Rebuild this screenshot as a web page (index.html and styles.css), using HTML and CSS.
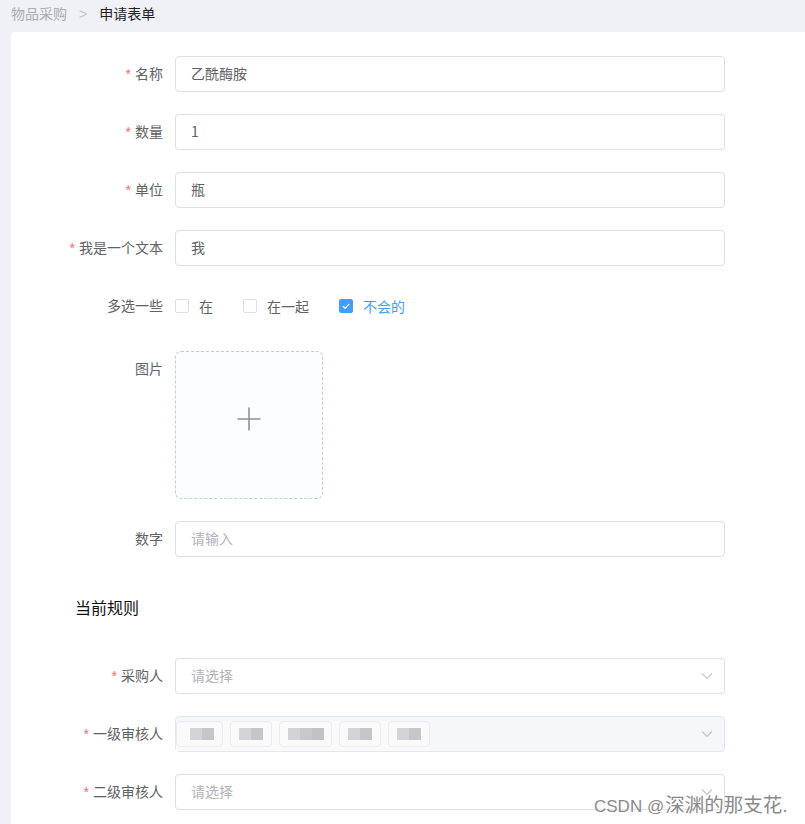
FILE: index.html
```html
<!DOCTYPE html>
<html lang="zh-CN">
<head>
<meta charset="utf-8">
<title>申请表单</title>
<link rel="stylesheet" href="styles.css">
</head>
<body>
<div class="breadcrumb">
  <span class="crumb">物品采购</span><span class="sep">&gt;</span><span class="crumb current">申请表单</span>
</div>
<div class="card">
  <div class="form-item">
    <label class="label"><span class="req">*</span>名称</label>
    <div class="input">乙酰酶胺</div>
  </div>
  <div class="form-item">
    <label class="label"><span class="req">*</span>数量</label>
    <div class="input">1</div>
  </div>
  <div class="form-item">
    <label class="label"><span class="req">*</span>单位</label>
    <div class="input">瓶</div>
  </div>
  <div class="form-item">
    <label class="label"><span class="req">*</span>我是一个文本</label>
    <div class="input">我</div>
  </div>
  <div class="form-item form-item--check">
    <label class="label">多选一些</label>
    <div class="checks">
      <span class="check"><span class="box"></span><span class="check-label">在</span></span>
      <span class="check"><span class="box"></span><span class="check-label">在一起</span></span>
      <span class="check is-checked"><span class="box"><svg viewBox="0 0 14 14" width="14" height="14"><path d="M4 7.2 L6.2 9.3 L10.2 4.8" fill="none" stroke="#fff" stroke-width="1.2"/></svg></span><span class="check-label">不会的</span></span>
    </div>
  </div>
  <div class="form-item form-item--upload">
    <label class="label">图片</label>
    <div class="upload">
      <svg viewBox="0 0 24 24" width="24" height="24"><path d="M12 0.5 V23.5 M0.5 12 H23.5" stroke="#8c939d" stroke-width="1.6" fill="none"/></svg>
    </div>
  </div>
  <div class="form-item">
    <label class="label">数字</label>
    <div class="input placeholder">请输入</div>
  </div>

  <h3 class="section-title">当前规则</h3>

  <div class="form-item">
    <label class="label"><span class="req">*</span>采购人</label>
    <div class="input select"><span class="placeholder">请选择</span><svg class="arrow" viewBox="0 0 12 8" width="12" height="8"><path d="M1 1.5 L6 6.5 L11 1.5" fill="none" stroke="#c0c4cc" stroke-width="1.1"/></svg></div>
  </div>
  <div class="form-item">
    <label class="label"><span class="req">*</span>一级审核人</label>
    <div class="input select disabled">
      <div class="tags">
        <span class="tag tag--first"><span class="blur"></span></span>
        <span class="tag"><span class="blur"></span></span>
        <span class="tag tag--wide"><span class="blur blur--wide"></span></span>
        <span class="tag"><span class="blur"></span></span>
        <span class="tag"><span class="blur"></span></span>
      </div>
      <svg class="arrow" viewBox="0 0 12 8" width="12" height="8"><path d="M1 1.5 L6 6.5 L11 1.5" fill="none" stroke="#c0c4cc" stroke-width="1.1"/></svg>
    </div>
  </div>
  <div class="form-item">
    <label class="label"><span class="req">*</span>二级审核人</label>
    <div class="input select"><span class="placeholder">请选择</span><svg class="arrow" viewBox="0 0 12 8" width="12" height="8"><path d="M1 1.5 L6 6.5 L11 1.5" fill="none" stroke="#c0c4cc" stroke-width="1.1"/></svg></div>
  </div>
</div>
<div class="watermark">CSDN @<span class="wm-cjk">深渊的那支花.</span></div>
</body>
</html>
```

FILE: styles.css
```css
html, body {
  margin: 0;
  padding: 0;
}
body {
  background: #f0f1f6;
  font-family: "Noto Sans CJK SC", "Liberation Sans", sans-serif;
  font-size: 14px;
  color: #606266;
  height: 824px;
  overflow: hidden;
  position: relative;
}
.breadcrumb {
  height: 32px;
  line-height: 26px;
  padding-left: 11px;
  font-size: 14px;
}
.crumb {
  color: #a8abb2;
}
.crumb.current {
  color: #1f1f1f;
}
.sep {
  color: #c0c4cc;
  font-family: "Liberation Sans", sans-serif;
  margin: 0 12px;
}
.card {
  margin-left: 11px;
  background: #fff;
  border-top-left-radius: 4px;
  padding-top: 24px;
  min-height: 800px;
}
.form-item {
  display: flex;
  align-items: flex-start;
  margin-bottom: 22px;
}
.label {
  width: 164px;
  box-sizing: border-box;
  padding-right: 12px;
  text-align: right;
  line-height: 34px;
  height: 36px;
  color: #606266;
}
.req {
  color: #f56c6c;
  margin-right: 4px;
  font-family: "Liberation Sans", sans-serif;
}
.input {
  width: 550px;
  height: 36px;
  box-sizing: border-box;
  border: 1px solid #dcdfe6;
  border-radius: 4px;
  padding: 0 15px;
  line-height: 32px;
  color: #606266;
}
.input.placeholder,
.placeholder {
  color: #b0b3ba;
}
.select {
  display: flex;
  align-items: center;
  justify-content: space-between;
  padding-right: 11px;
}
.select .placeholder {
  margin-top: -2px;
}
.arrow {
  flex: none;
}
.select.disabled {
  background: #f5f7fa;
  border-color: #e4e7ed;
  padding-left: 0;
}
.form-item--check {
  margin-bottom: 27px;
}
.checks {
  display: flex;
  align-items: center;
  height: 36px;
}
.check {
  display: inline-flex;
  align-items: center;
  margin-right: 30px;
  margin-top: -1px;
}
.box {
  width: 14px;
  height: 14px;
  box-sizing: border-box;
  border: 1px solid #dcdfe6;
  border-radius: 2px;
  background: #fff;
  display: inline-flex;
  margin-top: 1px;
}
.box svg {
  margin: -1px;
}
.check-label {
  padding-left: 10px;
  line-height: 20px;
}
.is-checked .box {
  background: #409eff;
  border-color: #409eff;
}
.is-checked .check-label {
  color: #409eff;
}
.form-item--upload {
  margin-bottom: 22px;
}
.upload {
  width: 148px;
  height: 148px;
  box-sizing: border-box;
  border: 1px dashed #c0ccda;
  border-radius: 6px;
  background: #fbfdff;
  display: flex;
  align-items: center;
  justify-content: center;
  padding-bottom: 12px;
}
.section-title {
  margin: 39px 0 38px 64px;
  font-size: 16px;
  line-height: 22px;
  font-weight: normal;
  color: #111;
  padding-bottom: 2px;
}
.tags {
  display: flex;
  gap: 7px;
  align-items: center;
  height: 34px;
  padding-left: 0;
  background: linear-gradient(#fafafb, #fafafb) no-repeat 0 4px / 256px 30px;
}
.tag {
  width: 42px;
  height: 26px;
  box-sizing: border-box;
  border: 1px solid #ececee;
  border-radius: 4px;
  background: #fafafb;
  display: flex;
  align-items: center;
  justify-content: center;
}
.tag--first {
  width: 47px;
  padding-left: 4px;
}
.tag--wide {
  width: 53px;
}
.blur {
  width: 24px;
  height: 12px;
  background: linear-gradient(90deg, #d4d4d6 0 50%, #c6c6c8 50% 100%);
}
.blur--wide {
  width: 36px;
  background: linear-gradient(90deg, #d2d2d4 0 33%, #c8c8ca 33% 66%, #c2c2c4 66% 100%);
}
.watermark {
  position: absolute;
  left: 594px;
  top: 793px;
  font-family: "Liberation Sans", "Noto Sans CJK SC", sans-serif;
  font-size: 17px;
  line-height: 24px;
  color: #8a8a8a;
  text-shadow: 0 0 2px #fff, 0 0 2px #fff;
  white-space: nowrap;
}
.wm-cjk {
  font-size: 19.5px;
  margin-left: 1px;
}
```
